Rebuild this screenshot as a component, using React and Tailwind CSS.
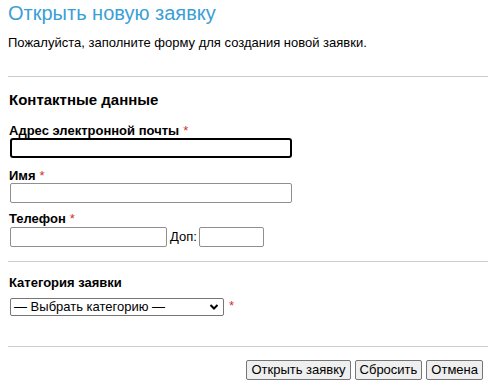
import React from "react";

function Req() {
  return <span className="text-[#cc3333] font-normal ml-1">*</span>;
}

function Label({ children, required }) {
  return (
    <div className="text-[13px] font-bold leading-[15px] text-black">
      {children}
      {required && <Req />}
    </div>
  );
}

export default function App() {
  return (
    <div
      className="w-[500px] h-[390px] bg-white px-2 overflow-hidden text-[13px] text-black"
      style={{ fontFamily: '"Liberation Sans", Arial, sans-serif' }}
    >
      <div className="w-[480px]">
        <h1 className="text-[20px] leading-[24px] pt-[1px] text-[#3b9fd6] font-normal">
          Открыть новую заявку
        </h1>
        <p className="mt-[10px] leading-[16px]">
          Пожалуйста, заполните форму для создания новой заявки.
        </p>
        <hr className="mt-[25px] border-0 border-t border-[#cccccc]" />

        {/* Contact data */}
        <div className="pl-[1px]">
          <h2 className="mt-[14px] text-[15px] font-bold leading-[18px]">Контактные данные</h2>

          <div className="mt-[14px]">
            <Label required>Адрес электронной почты</Label>
            <input
              type="text"
              className="block w-[282px] h-[20px] ml-[1px] border-2 border-black rounded-[3px] outline-none"
            />
          </div>

          <div className="mt-[10px]">
            <Label required>Имя</Label>
            <input
              type="text"
              className="block w-[282px] h-[20px] ml-[1px] border border-[#8f8f8f] rounded-[2px] outline-none"
            />
          </div>

          <div className="mt-[8px]">
            <Label required>Телефон</Label>
            <div className="flex items-center mt-[1px] ml-[1px]">
              <input
                type="text"
                className="block w-[157px] h-[20px] border border-[#8f8f8f] rounded-[2px] outline-none"
              />
              <span className="ml-[3px] mr-[2px]">Доп:</span>
              <input
                type="text"
                className="block w-[65px] h-[20px] border border-[#8f8f8f] rounded-[2px] outline-none"
              />
            </div>
          </div>
        </div>

        <hr className="mt-[14px] border-0 border-t border-[#cccccc]" />

        {/* Category */}
        <div className="pl-[1px]">
          <div className="mt-[13px]">
            <Label>Категория заявки</Label>
          </div>
          <div className="flex items-start mt-[8px] ml-[1px]">
            <div className="relative w-[214px] h-[18px] border border-[#767676] rounded-[2px] flex items-center">
              <span className="pl-[3px] text-[13px] leading-[16px]">— Выбрать категорию —</span>
              <svg
                className="absolute right-[4px] top-[4px]"
                width="10"
                height="8"
                viewBox="0 0 10 8"
              >
                <path d="M1.5 2 L5 5.5 L8.5 2" fill="none" stroke="#000" strokeWidth="2" />
              </svg>
            </div>
            <span className="text-[#cc3333] ml-[5px] leading-[16px]">*</span>
          </div>
        </div>

        <hr className="mt-[30px] border-0 border-t border-[#cccccc]" />

        <div className="flex justify-end gap-[4px] mt-[13px] pr-[5px]">
          <button className="h-[20px] px-[4px] text-[13px] leading-[16px] bg-[#efefef] border border-[#767676] rounded-[2px]">
            Открыть заявку
          </button>
          <button className="h-[20px] px-[4px] text-[13px] leading-[16px] bg-[#efefef] border border-[#767676] rounded-[2px]">
            Сбросить
          </button>
          <button className="h-[20px] px-[4px] text-[13px] leading-[16px] bg-[#efefef] border border-[#767676] rounded-[2px]">
            Отмена
          </button>
        </div>
      </div>
    </div>
  );
}
